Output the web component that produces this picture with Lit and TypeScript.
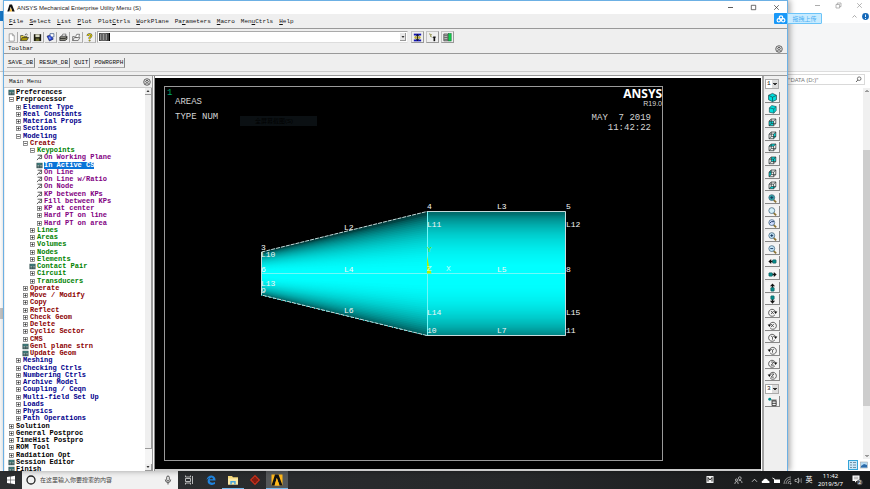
import { LitElement, html, css, svg } from "lit";
import { customElement } from "lit/decorators.js";
import { classMap } from "lit/directives/class-map.js";

type Row = [level: number, icon: string, label: string, tone: string];

const TREE: Row[] = [
  [0, "form", "Preferences", "black"],
  [0, "minus", "Preprocessor", "black"],
  [1, "plus", "Element Type", "blue"],
  [1, "plus", "Real Constants", "blue"],
  [1, "plus", "Material Props", "blue"],
  [1, "plus", "Sections", "blue"],
  [1, "minus", "Modeling", "blue"],
  [2, "minus", "Create", "red"],
  [3, "minus", "Keypoints", "green"],
  [4, "pick", "On Working Plane", "purple"],
  [4, "form", "In Active CS", "selected"],
  [4, "pick", "On Line", "purple"],
  [4, "pick", "On Line w/Ratio", "purple"],
  [4, "pick", "On Node", "purple"],
  [4, "pick", "KP between KPs", "purple"],
  [4, "pick", "Fill between KPs", "purple"],
  [4, "plus", "KP at center", "purple"],
  [4, "plus", "Hard PT on line", "purple"],
  [4, "plus", "Hard PT on area", "purple"],
  [3, "plus", "Lines", "green"],
  [3, "plus", "Areas", "green"],
  [3, "plus", "Volumes", "green"],
  [3, "plus", "Nodes", "green"],
  [3, "plus", "Elements", "green"],
  [3, "form", "Contact Pair", "green"],
  [3, "plus", "Circuit", "green"],
  [3, "plus", "Transducers", "green"],
  [2, "plus", "Operate", "red"],
  [2, "plus", "Move / Modify", "red"],
  [2, "plus", "Copy", "red"],
  [2, "plus", "Reflect", "red"],
  [2, "plus", "Check Geom", "red"],
  [2, "plus", "Delete", "red"],
  [2, "plus", "Cyclic Sector", "red"],
  [2, "plus", "CMS", "red"],
  [2, "form", "Genl plane strn", "red"],
  [2, "form", "Update Geom", "red"],
  [1, "plus", "Meshing", "blue"],
  [1, "plus", "Checking Ctrls", "blue"],
  [1, "plus", "Numbering Ctrls", "blue"],
  [1, "plus", "Archive Model", "blue"],
  [1, "plus", "Coupling / Ceqn", "blue"],
  [1, "plus", "Multi-field Set Up", "blue"],
  [1, "plus", "Loads", "blue"],
  [1, "plus", "Physics", "blue"],
  [1, "plus", "Path Operations", "blue"],
  [0, "plus", "Solution", "black"],
  [0, "plus", "General Postproc", "black"],
  [0, "plus", "TimeHist Postpro", "black"],
  [0, "plus", "ROM Tool", "black"],
  [0, "plus", "Radiation Opt", "black"],
  [0, "form", "Session Editor", "black"],
  [0, "form", "Finish", "black"],
];

// Menu label and the index of its underlined mnemonic.
const MENUS: [string, number][] = [
  ["File", 0], ["Select", 0], ["List", 0], ["Plot", 0], ["PlotCtrls", 4],
  ["WorkPlane", 0], ["Parameters", 2], ["Macro", 0], ["MenuCtrls", 3], ["Help", 0],
];

const treeIcon = (kind: string) => {
  const body =
    kind === "form"
      ? svg`<rect x="0.5" y="0.5" width="6" height="5.4" fill="#2c4a4a"/><rect x="1.2" y="1.2" width="4.6" height="1" fill="#4fa3a3"/><path d="M1.4 3.2h2M1.4 4.6h2M4.2 3.2h1.6M4.2 4.6h1.6" stroke="#cfe0e0" stroke-width=".6"/>`
      : kind === "pick"
        ? svg`<path d="M1.6 .9h4v3.4h-2.4M3.4 3L1 5.8M5.600.9L3.400 3" fill="none" stroke="#333" stroke-width=".8"/>`
        : svg`<rect x="1.5" y="1.2" width="4" height="4" fill="#fff" stroke="#666" stroke-width=".7"/><path d=${kind === "plus" ? "M2.2 3.2h2.6M3.5 1.9v2.6" : "M2.2 3.2h2.6"} stroke="#222" stroke-width=".7"/>`;
  return html`<svg class="ti" viewBox="0 0 7 6.4" aria-hidden="true">${body}</svg>`;
};

const cube = (faces: string[]) => svg`
  ${faces.map((d) => svg`<path d=${d} fill="#00dede"/>`)}
  <path d="M2.2 4.5h5v5h-5zM2.2 4.5l2.400-2.300h5l-2.400 2.300M9.600 2.200v5l-2.400 2.300M4.600 2.200v5h5M4.600 7.200l-2.400 2.300" fill="none" stroke="#2a3434" stroke-width=".8"/>`;
const lens = (fill: string, mark = "") => svg`
  <path d="M7.200 7.400l2.800 2.800" stroke="#8d7434" stroke-width="1.900"/>
  <circle cx="5.2" cy="5" r="3.200" fill=${fill} stroke="#4c6f86" stroke-width=".9"/>
  <path d=${mark} stroke="#14315c" stroke-width="1" fill="none"/>`;
const pan = (deg: number) => svg`
  <g transform=${`rotate(${deg} 6 6)`}><path d="M1.5 6L4.6 3.2v5.600z" fill="#111"/><path d="M4.4 6h2" stroke="#111" stroke-width="1.4"/><rect x="6" y="4.100" width="4" height="3.800" rx=".8" fill="#068a8a" stroke="#134b4b" stroke-width=".5"/></g>`;
const spin = (axis: string, flip: boolean) => svg`
  <g transform=${flip ? "matrix(-1 0 0 1 12 0)" : ""}><path d="M8.6 8.600A3.800 3.800 0 1 1 9.2 5.2" fill="none" stroke="#444" stroke-width=".9"/><path d="M7.500 5h3.800L9.400 7.500z" fill="#111"/></g>
  <path d=${axis} fill="none" stroke="#444" stroke-width=".9"/>`;

const AXIS = {
  x: "M4.4 4.3l3 3.4M7.4 4.3l-3 3.4",
  y: "M4.4 4l1.6 2 1.6-2M6 6v2.4",
  z: "M4.5 4.4h3l-3 3.4h3",
};

const VIEW_TOOLS: [string, unknown][] = [
  ["Isometric view", svg`<path d="M6 1.500l4.300 2.100v4.800L6 10.500 1.700 8.400V3.600z" fill="#00dede" stroke="#1c4c50" stroke-width=".8"/><path d="M1.700 3.600L6 5.700l4.300-2.100M6 5.700v4.800" fill="none" stroke="#1c4c50" stroke-width=".8"/>`],
  ["Oblique view", svg`<path d="M2.600 4.200l2.600-2.500 4.800 1.100v4.400L7.400 10 2.600 9z" fill="#00dede" stroke="#1c4c50" stroke-width=".7"/><path d="M2.600 4.200l4.800 1.100L10 2.800M7.400 5.300V10" fill="none" stroke="#1c4c50" stroke-width=".7"/>`],
  ["Front view", cube(["M2.2 4.5h5v5h-5z"])],
  ["Right view", cube(["M7.200 4.500l2.400-2.300v5l-2.400 2.300z"])],
  ["Top view", cube(["M2.200 4.500l2.400-2.300h5l-2.400 2.300z"])],
  ["Back view", cube(["M4.600 2.200h5v5h-5z"])],
  ["Left view", cube(["M2.200 4.500l2.400-2.300v5l-2.400 2.300z"])],
  ["Bottom view", cube(["M2.200 9.500l2.400-2.300h5l-2.400 2.300z"])],
  ["Fit view", lens("#31a8a8", "M3.600 5h3.200M5.200 3.400v3.200")],
  ["Zoom window", lens("#d4f0f8")],
  ["Zoom back", lens("#cfdcff", "M3 5.600l1.800-1.600h2.800")],
  ["Zoom in", lens("#c4e6f8", "M3.600 5h3.200M5.200 3.400v3.200")],
  ["Zoom out", lens("#c4e6f8", "M3.600 5h3.200")],
  ["Pan left", pan(0)],
  ["Pan right", pan(180)],
  ["Pan up", pan(90)],
  ["Pan down", pan(270)],
  ["Rotate +X", spin(AXIS.x, false)],
  ["Rotate -X", spin(AXIS.x, true)],
  ["Rotate +Y", spin(AXIS.y, false)],
  ["Rotate -Y", spin(AXIS.y, true)],
  ["Rotate +Z", spin(AXIS.z, false)],
  ["Rotate -Z", spin(AXIS.z, true)],
];

const FILE_TOOLS: [string, unknown][] = [
  ["New", svg`<path d="M3.500 2h3.600l1.900 1.900v6.100h-5.500z" fill="#fff" stroke="#777" stroke-width=".7"/><path d="M7 2v2h2" fill="none" stroke="#777" stroke-width=".6"/>`],
  ["Open", svg`<path d="M1.800 9.400V3.800h2.600l.9.900h3.200v1.500" fill="#e8d23c" stroke="#333" stroke-width=".7"/><path d="M1.800 9.400l1.800-3.400h6.800L8.500 9.400z" fill="#a8960c" stroke="#222" stroke-width=".7"/><path d="M6.500 2.800q2-1.400 3 .5" fill="none" stroke="#222" stroke-width=".7"/>`],
  ["Save", svg`<rect x="2" y="2.400" width="8" height="7.500" fill="#1c1c10"/><rect x="3.700" y="2.600" width="4.600" height="3" fill="#d8d8c0"/><rect x="4" y="7" width="4" height="2.700" fill="#6d6d30"/>`],
  ["Report", svg`<path d="M2.200 4.500l4.200-1.500 2.600 4.800-4.200 2z" fill="#2848d8" stroke="#113" stroke-width=".6"/><path d="M5.500 3.300V1.800h4.200v3.600H7.700" fill="#fff" stroke="#247" stroke-width=".7"/><path d="M4.200 6l1.600-.5M4.700 7.300l1.600-.6" stroke="#fff" stroke-width=".6"/>`],
  ["Print", svg`<path d="M2 5.500l2-1h5.800v3.300l-2 1.500H2z" fill="#8c8c80" stroke="#222" stroke-width=".8"/><path d="M4.200 4.500l1-2.200h3.600l-1 2.200z" fill="#fff" stroke="#333" stroke-width=".6"/><path d="M2.200 7h5.600l2-1.500" stroke="#111" stroke-width=".8" fill="none"/>`],
  ["Image capture", svg`<path d="M1.800 9.300V5h2l.8.800h2.400M1.800 9.300l1.900-3.200h6L7.800 9.300z" fill="#eee" stroke="#444" stroke-width=".7"/><path d="M5 5.200l1.300-2.700h3L8.600 5.500" fill="#fff" stroke="#444" stroke-width=".7"/>`],
  ["Help", svg`<path d="M3.900 4.300Q4 2.500 6 2.500t2.100 1.700Q8.100 5.300 6.100 6.200v1.300" fill="none" stroke="#444" stroke-width="2.100"/><path d="M3.900 4.300Q4 2.500 6 2.500t2.100 1.700Q8.100 5.300 6.100 6.200v1.300" fill="none" stroke="#e4d000" stroke-width="1.200"/><circle cx="6.100" cy="9.300" r=".9" fill="#c8b400" stroke="#444" stroke-width=".4"/>`],
];

const WINDOW_TOOLS: [string, unknown][] = [
  ["Raise hidden", svg`<rect x="2" y="1.800" width="8" height="2" fill="#1414b0"/><rect x="2" y="8.200" width="8" height="2" fill="#1414b0"/><rect x="2.500" y="5" width="7" height="2" fill="#c8b830"/><path d="M6 2.500v7M4 4.800L6 3.200l2 1.600M4 7.200L6 8.800l2-1.600" stroke="#111" stroke-width=".9" fill="none"/>`],
  ["Reset picking", svg`<path d="M2.200 2l2.800 1-1.600 1.400 1.800 1" fill="none" stroke="#8a8a40" stroke-width="1"/><path d="M8 10V5.500" stroke="#111" stroke-width="1.800"/><path d="M5.800 6.200h3.600V4.800H7z" fill="#111"/>`],
  ["Contact manager", svg`<path d="M2 2.200h4.400v7.400H2z" fill="#c8c8c8" stroke="#333" stroke-width=".8"/><path d="M2.500 4h3.500M2.500 6h3.500M2.500 8h3.500" stroke="#333" stroke-width=".7"/><rect x="7" y="1.800" width="3" height="8" fill="#10d048" stroke="#0a6830" stroke-width=".6"/>`],
];

// Labels of keypoints and lines in model space.
const LABELS: [number, number, string][] = [
  [427, 209, "4"], [497, 209, "L3"], [566, 209, "5"],
  [344, 230, "L2"], [427, 227, "L11"], [566, 227, "L12"],
  [261, 250, "3"], [261, 257, "L10"],
  [261, 272, "6"], [344, 272, "L4"], [497, 272, "L5"], [566, 272, "8"],
  [261, 286, "L13"], [261, 293, "9"],
  [344, 313, "L6"], [427, 315, "L14"], [566, 315, "L15"],
  [427, 333, "10"], [497, 333, "L7"], [566, 333, "11"],
];

const BANDS = 62;
const X0 = 261, X1 = 427, X2 = 566, MID = 273.5, R0 = 21.5, R1 = 62;

const tint = (t: number, floor: number) => {
  const s = Math.min(1, Math.abs(t - 0.04));
  const c = Math.round(255 * Math.min(1, floor + (1.01 - floor) * Math.pow(1 - s * s, 0.75)));
  return `rgb(0,${c},${c})`;
};

// Each band reaches down to the lower silhouette, so that the next one paints over it without a seam.
const surface = () =>
  Array.from({ length: BANDS }, (_, i) => {
    const a = -1 + (2 * i) / BANDS;
    const m = a + 1 / BANDS;
    return svg`
      <path d=${`M${X0} ${MID + a * R0}L${X1} ${MID + a * R1}V${MID + R1}L${X0} ${MID + R0}z`} fill=${tint(m, 0.24)}/>
      <path d=${`M${X1} ${MID + a * R1}H${X2}V${MID + R1}H${X1}z`} fill=${tint(m, 0.42)}/>`;
  });

@customElement("model-view")
export class ModelView extends LitElement {
  static styles = css`
    :host { display: block; min-width: 0; min-height: 0; background: #000; }
    svg { display: block; width: 100%; height: 100%; }
    .edge { fill: none; stroke: #c4dada; stroke-width: 1; }
    .dash { stroke-dasharray: 4 1; }
    .seam { fill: none; stroke: #70f8f8; stroke-width: 1; }
    .lbl { font: 8px "Liberation Mono", monospace; fill: #f4f6f6; }
    .note { font: 9px "Liberation Mono", monospace; fill: #d4d4d4; }
    .one { fill: #00a868; }
    .brand { font: bold 12px "Noto Sans", sans-serif; fill: #fff; }
    .rel { font: 7px "Liberation Sans", sans-serif; fill: #d8d8d8; }
    .ghost { font: 6px "Liberation Sans", "Noto Sans CJK SC", sans-serif; fill: #000; }
    .axis { fill: #80e800; }
    .ax { fill: #b8ffff; }
    .end { text-anchor: end; }
  `;

  render() {
    return html`<svg viewBox="155 78 606 391" preserveAspectRatio="xMidYMid meet" role="img" aria-label="Areas plot">
      <rect x="164.500" y="86.500" width="498" height="374" fill="none" stroke="#9a9a9a"/>
      <text class="note one" x="167" y="95">1</text>
      <text class="note" x="175" y="104">AREAS</text>
      <text class="note" x="175" y="119">TYPE NUM</text>
      <rect x="240" y="116" width="77" height="10" fill="#0b1013"/>
      <text class="ghost" x="255" y="123">全屏幕截图(S)</text>
      <text class="brand end" x="662" y="98">ANSYS</text>
      <text class="rel end" x="662" y="106">R19.0</text>
      <text class="note end" x="651" y="120" xml:space="preserve">MAY  7 2019</text>
      <text class="note end" x="651" y="130">11:42:22</text>
      ${surface()}
      <path class="seam" d="M261 273.500H566M427.500 211V335.500"/>
      <path class="edge" d="M427 211.500H565.500V335.500H427M261.500 252V295"/>
      <path class="edge dash" d="M261.500 252L427 211.500M427 335.500L261.500 295"/>
      <path d="M427 256l2 10 2.500 7.500h-4.500z" fill="#b4f000"/>
      <text class="lbl axis" x="427" y="252">Y</text>
      <text class="lbl ax" x="446" y="271">X</text>
      <text class="lbl ax" x="427" y="271">Z</text>
      ${LABELS.map(([x, y, s]) => svg`<text class="lbl" x=${x} y=${y}>${s}</text>`)}
    </svg>`;
  }
}

@customElement("main-menu-tree")
export class MainMenuTree extends LitElement {
  static styles = css`
    :host { display: flex; min-height: 0; overflow: hidden; background: #fff; }
    ul { flex: 1; min-width: 0; display: flex; flex-direction: column; list-style: none; margin: 1px 0 -2px; padding: 0; }
    li { flex: 1 1 0; min-height: 0; display: flex; align-items: center; padding-left: 3px; }
    .l1 { padding-left: 10px; }
    .l2 { padding-left: 17px; }
    .l3 { padding-left: 24px; }
    .l4 { padding-left: 31px; }
    button { display: flex; align-items: center; gap: 1px; height: 7px; border: 0; padding: 0; background: none; white-space: nowrap;
      font: bold 7px/7px "Liberation Mono", monospace; color: #000; }
    .ti { width: 7px; height: 7px; flex: none; }
    .blue { color: #00008c; }
    .red { color: #8c0000; }
    .green { color: #008200; }
    .purple { color: #820082; }
    .selected span { background: #0a74d8; color: #fff; }
  `;

  render() {
    return html`<ul>
      ${TREE.map(
        ([level, icon, label, tone]) => html`<li class=${`l${level}`}>
          <button class=${classMap({ [tone]: true })}>${treeIcon(icon)}<span>${label}</span></button>
        </li>`,
      )}
    </ul>`;
  }
}

@customElement("task-bar")
export class TaskBar extends LitElement {
  static styles = css`
    :host { display: flex; align-items: stretch; background: linear-gradient(90deg, #2d2f31, #26282a 60%, #161718); color: #fff;
      font: 6px/8px "Noto Sans", "Noto Sans CJK SC", sans-serif; }
    button { border: 0; padding: 0; background: none; color: inherit; display: grid; place-items: center; font: inherit; }
    svg { display: block; width: 12px; height: 12px; }
    .start { width: 22px; }
    .search { display: flex; align-items: center; gap: 3px; width: 156px; box-sizing: border-box; padding: 0 4px 0 3px; background: #f1f1f1; }
    .search input { flex: 1; min-width: 0; border: 0; padding: 0; background: none; font: inherit; color: #444; }
    .search input::placeholder { color: #444; opacity: 1; }
    .app { width: 22px; box-sizing: border-box; border-bottom: 1px solid transparent; }
    .open { border-color: #76b9ed; }
    .active { background: #55585a; }
    .space { flex: 1; }
    .m { margin-right: 17px; }
    .tray { display: flex; align-items: center; gap: 1px; }
    .tray button { width: 10px; }
    .tray svg { width: 9px; height: 9px; }
    .people { margin-right: 6px; }
    .clock { width: 33px; text-align: center; align-content: center; }
    .note { width: 20px; margin-right: 3px; }
    .ime { font-size: 7px; }
  `;

  render() {
    return html`
      <button class="start" aria-label="Start"><svg viewBox="0 0 12 12"><path d="M2 3l3.500-.5v3.200H2zM6 2.400L10 1.800v3.900H6zM2 6.300h3.500v3.200L2 9zM6 6.300h4v3.900L6 9.600z" fill="#fff"/></svg></button>
      <label class="search">
        <svg viewBox="0 0 12 12" aria-hidden="true"><circle cx="6" cy="6" r="4" fill="none" stroke="#222" stroke-width="1.300"/></svg>
        <input aria-label="搜索" placeholder="在这里输入你要搜索的内容" />
        <svg viewBox="0 0 12 12" aria-hidden="true"><rect x="4.700" y="2" width="2.600" height="5" rx="1.300" fill="none" stroke="#333" stroke-width=".8"/><path d="M3.300 5.500q0 3 2.700 3t2.700-3M6 8.500v2" fill="none" stroke="#333" stroke-width=".8"/></svg>
      </label>
      <button class="app" aria-label="Task view"><svg viewBox="0 0 12 12"><path d="M2.500 1.500v1.500h5V1.500M2.500 10.500V9h5v1.500M2.500 4.500h5v3h-5zM9.500 2v8" fill="none" stroke="#ddd" stroke-width=".8"/></svg></button>
      <button class="app" aria-label="Edge"><svg viewBox="0 0 12 12"><path d="M1.500 6Q2.500 1.500 6.500 1.500 10.500 1.800 10.600 6.600H4.600Q5 8.800 7.200 8.800 8.800 8.800 10 8.100v2Q8.600 11 6.600 10.900 2.700 10.700 2.600 7 2.800 4.900 5 3.800 2.900 4 1.500 6zM4.800 5.200H8Q8 3.700 6.500 3.600 5.100 3.700 4.800 5.200z" fill="#1f83de"/></svg></button>
      <button class="app open" aria-label="Explorer"><svg viewBox="0 0 12 12"><path d="M1 2h4l1 1.200h5V10.500H1z" fill="#f5d77a"/><path d="M1 4.500h10v6H1z" fill="#fbe9a8"/><path d="M3.300 10.500V7h5.400v3.500H7.200V8.500H4.800v2z" fill="#4aa6dc"/></svg></button>
      <button class="app" aria-label="Workbench"><svg viewBox="0 0 12 12"><path d="M6 .8L11.200 6 6 11.200.800 6z" fill="#c0301c"/><path d="M3.400 6L6 3.400 8.600 6 6 8.600zM6 3.400v5.200M3.400 6h5.200" fill="none" stroke="#5c100a" stroke-width=".8"/></svg></button>
      <button class="app open active" aria-label="ANSYS"><svg viewBox="0 0 12 12"><rect x=".5" y=".5" width="11" height="11" fill="#ffb71b"/><path d="M.5 11.500L4 .5h3.500l4 11h-3L5.800 4 3.600 11.500z" fill="#111"/><path d="M5.800 4L3.600 11.500h4.900z" fill="#ffb71b"/></svg></button>
      <span class="space"></span>
      <button class="m" aria-label="Input"><svg viewBox="0 0 12 12"><rect x="2.500" y="2" width="7" height="7" fill="#f4f4f4"/><path d="M4 7.500v-4l2 2.500 2-2.500v4" fill="none" stroke="#111" stroke-width=".9"/></svg></button>
      <div class="tray people">
        <button aria-label="People"><svg viewBox="0 0 9 9"><circle cx="5.800" cy="2.200" r="1.400" fill="none" stroke="#ddd" stroke-width=".7"/><circle cx="2.500" cy="4" r="1.100" fill="none" stroke="#ddd" stroke-width=".7"/><path d="M.8 8q.2-2.500 1.800-2.500T4.200 8M4.600 4.800Q7.800 3.500 8 7" fill="none" stroke="#ddd" stroke-width=".7"/></svg></button>
      </div>
      <div class="tray">
        <button aria-label="More"><svg viewBox="0 0 9 9"><path d="M2 5.800l2.500-2.600L7 5.800" fill="none" stroke="#ddd" stroke-width=".8"/></svg></button>
        <button aria-label="OneDrive"><svg viewBox="0 0 9 9"><path d="M1 7q-1-2 1-2.600Q2.800 2.200 4.800 2.800 6.600 3 6.900 4.500 9 4.800 8.400 7z" fill="#fff"/></svg></button>
        <button aria-label="Battery"><svg viewBox="0 0 9 9"><rect x="2" y="3.500" width="6" height="3.500" fill="#fff"/><path d="M.5 2l2.500 1.500" stroke="#fff"/></svg></button>
        <button aria-label="Network"><svg viewBox="0 0 9 9"><path d="M1 8A7 7 0 0 1 8 1M3 8a5 5 0 0 1 5-5M5 8a3 3 0 0 1 3-3M7 8V7h1v1z" fill="none" stroke="#bbb" stroke-width=".7"/></svg></button>
        <button aria-label="Volume"><svg viewBox="0 0 9 9"><path d="M1 3.500h1.500L4.500 2v5L2.500 5.500H1z" fill="none" stroke="#ccc" stroke-width=".7"/><path d="M5.800 3.200v2.800M7.300 2.200v4.800" stroke="#aaa" stroke-width=".6"/></svg></button>
        <button class="ime">英</button>
      </div>
      <button class="clock"><span>11:42</span><span>2019/5/7</span></button>
      <button class="note" aria-label="Notifications"><svg viewBox="0 0 12 12"><path d="M1.500 1.500h7v5.500h-3L4 8.800V7H1.500z" fill="#fff"/><path d="M2.800 3.200h4.500M2.800 4.800h4.500" stroke="#666" stroke-width=".6"/><circle cx="8.700" cy="8.300" r="2.900" fill="#565656"/><text x="7.300" y="10.300" font-size="5" fill="#fff">2</text></svg></button>
    `;
  }
}

@customElement("app-root")
export class AppRoot extends LitElement {
  static styles = css`
    :host { display: grid; grid-template-rows: minmax(0, 1fr) 18px; height: 100vh; position: relative; overflow: hidden; background: #fff;
      font: 6px/8px "Liberation Mono", monospace; color: #111; }
    * { box-sizing: border-box; }
    button, input, select { font: inherit; color: inherit; margin: 0; padding: 0; border: 0; background: none; }
    svg { display: block; }

    .desk { display: grid; grid-template-columns: 3px minmax(0, 1fr) 82px; min-height: 0; }
    .behind { display: flex; flex-direction: column; background: #f8f9fa; }
    .tab { margin-top: 11px; height: 10px; background: #1878c8; }
    .gutter { flex: 1; border-top: 1px solid #ccc; margin-top: 50px; background: #fff; }
    .nub { height: 11px; background: #c4c4c4; margin-bottom: 152px; }

    .win { display: flex; flex-direction: column; min-width: 0; min-height: 0; position: relative; z-index: 1; background: #efefef;
      border: solid #6cb0e4; border-width: 1px 1px 0; box-shadow: 2px 0 6px rgba(0, 0, 0, .35); }
    .title { height: 13px; flex: none; display: flex; align-items: center; gap: 2px; padding-left: 3px; background: #fff;
      font: 6px/8px "Liberation Sans", sans-serif; color: #222; }
    .title h1 { flex: 1; margin: 0; font: inherit; }
    .logo { width: 8px; height: 8px; }
    .ctl { width: 21px; display: grid; place-items: center; }
    .ctl svg { width: 7px; height: 7px; }
    .menus { height: 15px; flex: none; display: flex; align-items: center; gap: 6px; padding: 2px 5px 0; border-bottom: 1px solid #999; }
    .menus u { text-decoration-thickness: 1px; }
    .tools { height: 16px; flex: none; display: flex; align-items: center; padding-left: 2px; }
    .tool { width: 12px; height: 11px; margin-right: 1px; border-right: 1px solid #aaa; border-bottom: 1px solid #bbb; flex: none; }
    .tool svg { width: 11px; height: 11px; }
    .combo { display: flex; width: 311px; height: 12px; margin-right: 2px; border: 1px solid #aaa; border-right-color: #eee; border-bottom-color: #ddd; background: #fff; padding: 1px; }
    .hist { width: 10px; background: #444; }
    .hist svg { width: 9px; height: 8px; }
    .combo input { flex: 1; min-width: 0; border-left: 1px solid #000; }
    .drop { width: 6px; display: grid; place-items: center; background: #e8e8e8; border: solid #999; border-width: 0 1px 1px 0; }
    .drop svg { width: 4px; height: 4px; }
    .wtool { width: 13px; margin: 0 1px; height: 12px; border: 1px solid #c4c4c4; border-right-color: #999; border-bottom-color: #999; }
    .bar { height: 9px; flex: none; display: flex; justify-content: space-between; align-items: center; padding: 0 4px; border-bottom: 1px solid #999; }
    .bar h2 { font: inherit; margin: 0; }
    .roll { width: 8px; height: 8px; }
    .abbr { height: 18px; flex: none; display: flex; align-items: center; gap: 3px; padding: 0 3px; border-bottom: 1px solid #ccc; }
    .abbr button { height: 10px; padding: 1px 1px 0; border-right: 1px solid #888; border-bottom: 1px solid #aaa; }
    .rule { height: 4px; flex: none; border-bottom: 1px solid #999; }

    .body { flex: 1; min-height: 0; display: grid; grid-template-columns: 148px 3px minmax(0, 1fr) 3px 23px; }
    .side { display: flex; flex-direction: column; min-height: 0; }
    .head { height: 12px; flex: none; display: flex; justify-content: space-between; align-items: center; padding: 1px 1px 0 5px; border-bottom: 1px solid #ccc; }
    .head h2 { font: inherit; margin: 0; }
    .list { flex: 1; min-height: 0; display: grid; grid-template-columns: minmax(0, 1fr) 7px; padding-left: 1px; }
    .scroll { display: flex; flex-direction: column; justify-content: space-between; background: #f5f5f5; }
    .scroll span { display: grid; place-items: center; height: 7px; border: solid #999; border-width: 0 1px 1px 0; background: #eee; }
    .scroll svg { width: 4px; height: 4px; }
    .thumb { flex: 1; background: #efefef; border: solid #999; border-width: 0 1px 1px 0; margin-bottom: 15px; }
    .split { background: #fafafa; border-left: 1px solid #999; border-right: 1px solid #888; }
    .view { border-top: 2px solid #fff; border-bottom: 2px solid #ccc; }
    .rsplit { background: #a4a4a4; border-left: 1px solid #fff; }
    .dock { display: grid; grid-template-rows: repeat(31, minmax(0, 1fr)); align-items: center; padding: 2px 7px 0 1px; }
    .dock button { height: 11px; width: 15px; display: grid; place-items: center; border: solid #888; border-width: 0 1px 1px 0; background: #f4f4f4; }
    .dock svg { width: 11px; height: 11px; }
    .dock select { width: 14px; height: 10px; border: 1px solid #aaa; appearance: none; padding-left: 1px;
      background: linear-gradient(#333, #333) 7px 3px / 4px 1px no-repeat, linear-gradient(#333, #333) 8px 4px / 2px 1px no-repeat, linear-gradient(#ddd, #ddd) 6px 0 / 6px 8px no-repeat, #fff; }

    .exp { display: flex; flex-direction: column; min-width: 0; min-height: 0; background: #fff; font: 6px/8px "Noto Sans", "Noto Sans CJK SC", sans-serif; color: #888; }
    .etitle { height: 10px; flex: none; display: flex; justify-content: flex-end; }
    .etitle .ctl svg { opacity: .5; }
    .etabs { height: 13px; flex: none; display: flex; align-items: center; justify-content: flex-end; gap: 4px; padding-right: 1px; }
    .etabs svg { width: 7px; height: 7px; }
    .ribbon { height: 49px; flex: none; background: #f5f6f7; border-bottom: 1px solid #ddd; }
    .find { height: 11px; flex: none; display: flex; align-items: center; margin: 2px 5px 3px 0; border: 1px solid #d9d9d9; border-left: 0; }
    .find input { flex: 1; min-width: 0; }
    .find input::placeholder { color: #777; opacity: 1; }
    .find svg { width: 7px; height: 7px; margin-right: 2px; }
    .files { flex: 1; min-height: 0; display: flex; justify-content: flex-end; }
    .escroll { width: 7px; background: #f0f0f0; display: flex; flex-direction: column; align-items: center; }
    .escroll svg { width: 6px; height: 6px; flex: none; }
    .ethumb { width: 7px; flex: 256; background: #cdcdcd; }
    .before { flex: 56; }
    .after { flex: 47; }
    .modes { height: 12px; flex: none; display: flex; justify-content: flex-end; gap: 1px; padding: 1px; }
    .modes button { width: 10px; height: 10px; display: grid; place-items: center; }
    .modes .on { background: #cbe8f8; border: 1px solid #34a4d8; }
    .modes svg { width: 8px; height: 8px; }
    .upload { position: absolute; z-index: 2; right: 48px; top: 13px; width: 48px; height: 11px; display: flex; align-items: stretch; padding: 0; font: 6px/8px "Noto Sans CJK SC", sans-serif; color: #4cb0f4; }
    .upload i { width: 13px; display: grid; place-items: center; background: #1898f8; border-radius: 1px 0 0 1px; }
    .upload i svg { width: 10px; height: 8px; }
    .upload span { flex: 1; display: grid; place-items: center; background: #c8ebff; border: 1px solid #6cc4f8; border-radius: 0 1px 1px 0; }
  `;

  private roll() {
    return html`<button class="roll" aria-label="Roll up"><svg viewBox="0 0 8 8"><circle cx="4" cy="4" r="3.300" fill="#ddd" stroke="#333" stroke-width=".7"/><path d="M2.300 3.800L4 2.200l1.700 1.600M2.300 6L4 4.400 5.700 6" fill="none" stroke="#222" stroke-width=".8"/></svg></button>`;
  }

  private controls(restore = false) {
    return html`
      <button class="ctl" aria-label="Minimize"><svg viewBox="0 0 7 7"><path d="M1 3.500h5" stroke="#333" stroke-width=".8"/></svg></button>
      <button class="ctl" aria-label="Maximize"><svg viewBox="0 0 7 7"><path d=${restore ? "M1 2.500h3.600v3.500H1zM2.300 2.500V1H6v3.600H4.600" : "M1.300 1.300h4.400v4.400H1.300z"} fill="none" stroke="#333" stroke-width=".7"/></svg></button>
      <button class="ctl" aria-label="Close"><svg viewBox="0 0 7 7"><path d="M1.200 1.200l4.600 4.600M5.800 1.200L1.200 5.800" stroke="#333" stroke-width=".7"/></svg></button>`;
  }

  private arrow(up: boolean) {
    return html`<svg viewBox="0 0 4 4" aria-hidden="true"><path d=${up ? "M.5 3L2 1l1.500 2z" : "M.5 1h3L2 3z"} fill="#333"/></svg>`;
  }

  render() {
    return html`
      <div class="desk">
        <div class="behind"><div class="tab"></div><div class="gutter"></div><div class="nub"></div></div>

        <main class="win">
          <header class="title">
            <svg class="logo" viewBox="0 0 8 8"><path d="M.3 7.500L2.500.5H5L7.700 7.500H5.300L3.700 2.800 2.400 7.500z" fill="#111"/><path d="M3.700 3.500L2.700 7.500H5z" fill="#f0b020"/></svg>
            <h1>ANSYS Mechanical Enterprise Utility Menu (S)</h1>
            ${this.controls()}
          </header>
          <nav class="menus">
            ${MENUS.map(([s, i]) => html`<button>${s.slice(0, i)}<u>${s[i]}</u>${s.slice(i + 1)}</button>`)}
          </nav>
          <div class="tools">
            ${FILE_TOOLS.map(([n, g]) => html`<button class="tool" aria-label=${n}><svg viewBox="0 0 12 12">${g}</svg></button>`)}
            <div class="combo">
              <span class="hist"><svg viewBox="0 0 9 8"><path d="M1.500 1h6v6h-6zM1.500 3h6M1.500 5h6M4.500 1v6" fill="none" stroke="#bbb" stroke-width=".6"/></svg></span>
              <input aria-label="Command" />
              <button class="drop" aria-label="History">${this.arrow(false)}</button>
            </div>
            ${WINDOW_TOOLS.map(([n, g]) => html`<button class="tool wtool" aria-label=${n}><svg viewBox="0 0 12 12">${g}</svg></button>`)}
          </div>
          <div class="bar"><h2>Toolbar</h2>${this.roll()}</div>
          <div class="abbr">${["SAVE_DB", "RESUM_DB", "QUIT", "POWRGRPH"].map((s) => html`<button>${s}</button>`)}</div>
          <div class="rule"></div>
          <div class="body">
            <section class="side">
              <div class="head"><h2>Main Menu</h2>${this.roll()}</div>
              <div class="list">
                <main-menu-tree></main-menu-tree>
                <div class="scroll"><span>${this.arrow(true)}</span><div class="thumb"></div><span>${this.arrow(false)}</span></div>
              </div>
            </section>
            <div class="split"></div>
            <model-view class="view"></model-view>
            <div class="rsplit"></div>
            <aside class="dock">
              <select aria-label="Window"><option>1</option></select>
              ${VIEW_TOOLS.map(([n, g]) => html`<button aria-label=${n}><svg viewBox="0 0 12 12">${g}</svg></button>`)}
              <select aria-label="Rate"><option>3</option></select>
              <button aria-label="Dynamic mode"><svg viewBox="0 0 12 12"><circle cx="3" cy="3.500" r="1.600" fill="#068a8a"/><path d="M4.500 4.500h6M5.500 5.500h4.500v5H5.500zM5.500 8h4.500" fill="none" stroke="#222" stroke-width=".9"/></svg></button>
            </aside>
          </div>
        </main>

        <section class="exp">
          <div class="etitle">${this.controls(true)}</div>
          <div class="etabs">
            <svg viewBox="0 0 7 7"><path d="M1.500 4.500l2-2 2 2" fill="none" stroke="#888" stroke-width=".7"/></svg>
            <svg viewBox="0 0 7 7"><circle cx="3.500" cy="3.500" r="3.400" fill="#1468b8"/><path d="M3.500 1.500v2.500M3.500 5v1" stroke="#fff" stroke-width=".9"/></svg>
          </div>
          <div class="ribbon"></div>
          <label class="find"><input aria-label="Search" placeholder='"DATA (D:)"' /><svg viewBox="0 0 7 7"><circle cx="4.200" cy="2.700" r="1.800" fill="none" stroke="#555" stroke-width=".8"/><path d="M2.900 4L1 6" stroke="#555" stroke-width=".9"/></svg></label>
          <div class="files"><div class="escroll">
            <svg viewBox="0 0 6 6"><path d="M1.500 4L3 2.500 4.500 4" fill="none" stroke="#444"/></svg>
            <div class="before"></div><div class="ethumb"></div><div class="after"></div>
            <svg viewBox="0 0 6 6"><path d="M1.500 2L3 3.500 4.500 2" fill="none" stroke="#444"/></svg>
          </div></div>
          <div class="modes">
            <button class="on" aria-label="Details"><svg viewBox="0 0 8 8"><path d="M1 1.500h2M1 4h2M1 6.500h2M4 1.500h3M4 4h3M4 6.500h3" stroke="#5a7a90" stroke-width=".8"/></svg></button>
            <button aria-label="Thumbnails"><svg viewBox="0 0 8 8"><rect x=".5" y="1" width="7" height="6" fill="#b8dcf4" stroke="#999" stroke-width=".5"/><path d="M1 5l3-2 3 1v2.500H1z" fill="#2c6cac"/></svg></button>
          </div>
        </section>
      </div>
      <button class="upload"><i><svg viewBox="0 0 10 8"><g fill="none" stroke="#fff" stroke-width="1.200"><circle cx="5" cy="2.500" r="1.700"/><circle cx="2.800" cy="5.300" r="1.700"/><circle cx="7.200" cy="5.300" r="1.700"/></g></svg></i><span>拖拽上传</span></button>
      <task-bar></task-bar>
    `;
  }
}
